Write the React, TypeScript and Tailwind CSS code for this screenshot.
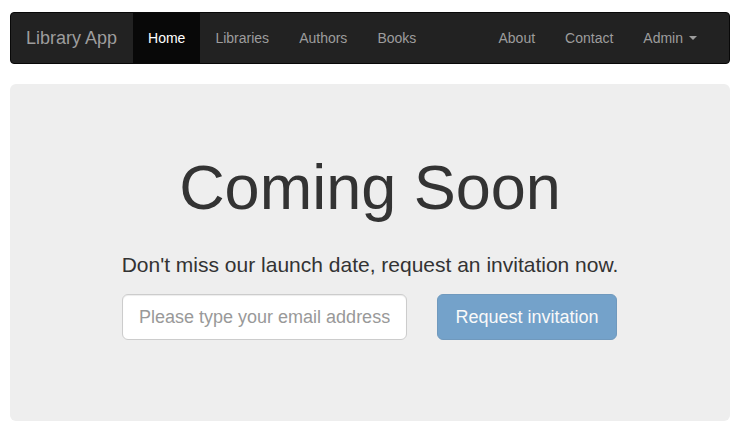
// Library App — landing page (navbar + "Coming Soon" jumbotron)

const leftLinks = [
  { label: 'Home', active: true },
  { label: 'Libraries', active: false },
  { label: 'Authors', active: false },
  { label: 'Books', active: false },
];

const rightLinks = ['About', 'Contact'];

function NavLink({ label, active }: { label: string; active?: boolean }) {
  return (
    <a
      href="#"
      className={
        active
          ? 'block bg-[#080808] px-[15px] py-[15px] text-[14px] leading-[20px] text-white'
          : 'block px-[15px] py-[15px] text-[14px] leading-[20px] text-[#9d9d9d] hover:text-white'
      }
    >
      {label}
    </a>
  );
}

export default function App() {
  return (
    <div
      className="min-h-[445px] bg-white pl-[10px] pt-[12px] text-[#333]"
      style={{ fontFamily: '"Liberation Sans", Arial, Helvetica, sans-serif' }}
    >
      <div className="w-[720px]">
        {/* Navbar */}
        <nav className="mb-[20px] flex h-[52px] items-stretch rounded-[4px] border border-[#080808] bg-[#222] pr-[17px]">
          <a href="#" className="block py-[15px] pl-[15px] pr-[16px] text-[18px] leading-[20px] text-[#9d9d9d]">
            Library App
          </a>
          <ul className="flex">
            {leftLinks.map((l) => (
              <li key={l.label}>
                <NavLink label={l.label} active={l.active} />
              </li>
            ))}
          </ul>
          <ul className="ml-auto flex">
            {rightLinks.map((l) => (
              <li key={l}>
                <NavLink label={l} />
              </li>
            ))}
            <li>
              <a href="#" className="flex items-center px-[15px] py-[15px] text-[14px] leading-[20px] text-[#9d9d9d]">
                Admin
                <span className="ml-[6px] inline-block h-0 w-0 border-x-[4px] border-t-[4px] border-x-transparent border-t-[#9d9d9d]" />
              </a>
            </li>
          </ul>
        </nav>

        {/* Jumbotron */}
        <div className="flex h-[337px] flex-col items-center rounded-[6px] bg-[#eee] pt-[69px]">
          <h1 className="text-[63px] leading-[69px] font-normal">Coming Soon</h1>
          <p className="mt-[28px] text-[21px] leading-[30px] font-normal">
            Don't miss our launch date, request an invitation now.
          </p>
          <form className="mt-[14px] mr-px flex gap-[30px]" onSubmit={(e) => e.preventDefault()}>
            <input
              type="email"
              placeholder="Please type your email address"
              className="h-[46px] w-[285px] rounded-[6px] border border-[#ccc] bg-white px-[16px] text-[18px] leading-[24px] text-[#555] shadow-[inset_0_1px_1px_rgba(0,0,0,0.075)] outline-none placeholder:text-[#999]"
            />
            <button
              type="submit"
              disabled
              className="h-[46px] w-[180px] rounded-[6px] border border-[#2e6da4] bg-[#337ab7] px-[16px] text-[18px] leading-[24px] text-white opacity-65"
            >
              Request invitation
            </button>
          </form>
        </div>
      </div>
    </div>
  );
}
